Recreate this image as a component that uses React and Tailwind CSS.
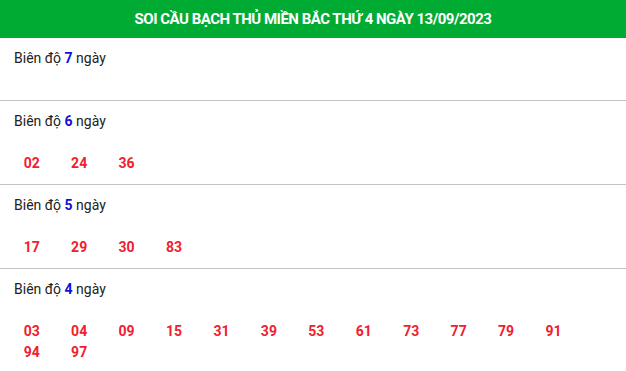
import React from "react";

const sections = [
  { n: 7, nums: [] },
  { n: 6, nums: ["02", "24", "36"] },
  { n: 5, nums: ["17", "29", "30", "83"] },
  { n: 4, nums: ["03", "04", "09", "15", "31", "39", "53", "61", "73", "77", "79", "91", "94", "97"] },
];

export default function App() {
  return (
    <div className="w-[626px] bg-white" style={{ fontFamily: "Roboto, 'Liberation Sans', sans-serif" }}>
      <div className="h-[38px] bg-[#00ab34] flex items-center justify-center">
        <h1 className="text-white font-bold text-[15px] tracking-[-0.5px]">
          SOI CẦU BẠCH THỦ MIỀN BẮC THỨ 4 NGÀY 13/09/2023
        </h1>
      </div>
      {sections.map((s, i) => (
        <div key={s.n} className={`pt-[10px] pb-[10px] ${i < sections.length - 1 ? "border-b border-[#c4c4c4]" : ""}`}>
          <div className="pl-[14px] text-[14px] leading-[21px] text-[#222]">
            Biên độ <span className="text-[#1010dd] font-bold">{s.n}</span> ngày
          </div>
          <div className="mt-[21px] pl-[8px] flex flex-wrap w-[610px]">
            {s.nums.map((x) => (
              <span key={x} className="w-[47.45px] text-center text-[14px] leading-[21px] font-bold text-[#f0202e]">
                {x}
              </span>
            ))}
          </div>
        </div>
      ))}
    </div>
  );
}
